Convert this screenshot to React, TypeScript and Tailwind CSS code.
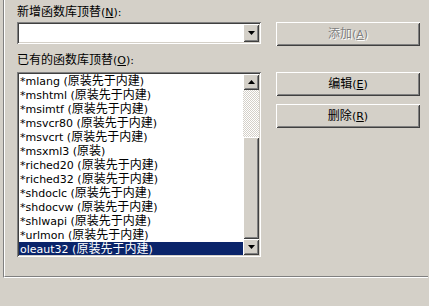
const items = [
  "*mlang (原装先于内建)",
  "*mshtml (原装先于内建)",
  "*msimtf (原装先于内建)",
  "*msvcr80 (原装先于内建)",
  "*msvcrt (原装先于内建)",
  "*msxml3 (原装)",
  "*riched20 (原装先于内建)",
  "*riched32 (原装先于内建)",
  "*shdoclc (原装先于内建)",
  "*shdocvw (原装先于内建)",
  "*shlwapi (原装先于内建)",
  "*urlmon (原装先于内建)",
  "oleaut32 (原装先于内建)",
];
const selected = 12;

// classic 3d edges
const sunken =
  "shadow-[inset_1px_1px_0_#808080,inset_-1px_-1px_0_#ffffff,inset_2px_2px_0_#404040,inset_-2px_-2px_0_#d4d0c8]";
const raised =
  "shadow-[inset_1px_1px_0_#ffffff,inset_-1px_-1px_0_#404040,inset_2px_2px_0_#d4d0c8,inset_-2px_-2px_0_#808080]";

// chinese glyphs a bit larger than the latin ones
const Txt = ({ s }: { s: string }) => (
  <>
    {s.split(/([\u4e00-\u9fff]+)/).map((p, i) =>
      /[\u4e00-\u9fff]/.test(p) ? (
        <span key={i} className="text-[12px]">
          {p}
        </span>
      ) : (
        p
      )
    )}
  </>
);

const Arrow = ({ up }: { up?: boolean }) => (
  <svg width="7" height="4" viewBox="0 0 7 4">
    {up ? <path d="M3.5 0 L7 4 L0 4 Z" fill="#000" /> : <path d="M0 0 L7 0 L3.5 4 Z" fill="#000" />}
  </svg>
);

const Button = ({ label, k, disabled, className }: { label: string; k: string; disabled?: boolean; className?: string }) => (
  <div
    className={`h-[24px] w-[144px] bg-[#d4d0c8] flex items-center justify-center text-[11px] ${raised} ${
      disabled ? "text-[#808080] [text-shadow:1px_1px_0_#ffffff]" : "text-black"
    } ${className ?? ""}`}
  >
    <span>
      <Txt s={label} />(<u>{k}</u>)
    </span>
  </div>
);

export default function App() {
  return (
    <div className="w-[429px] h-[306px] overflow-hidden bg-[#d4d0c8] pl-[3px] font-['DejaVu_Sans','Noto_Sans_CJK_SC',sans-serif] text-black">
      {/* group box, top and right edges are off screen */}
      <div className="h-[278px] w-[425px] border-l border-b border-l-[#808080] border-b-white">
        <div className="h-full border-l border-b border-l-white border-b-[#808080] flex gap-[15px] pl-[12px] pt-[5px]">
          {/* left column */}
          <div className="w-[244px] flex flex-col">
            <div className="h-[14px] leading-[14px] text-[11px]">
              <Txt s="新增函数库顶替" />(<u>N</u>):
            </div>
            <div className={`mt-[3px] h-[22px] bg-white ${sunken} p-[2px] flex justify-end`}>
              <div className={`w-[16px] h-full bg-[#d4d0c8] ${raised} flex items-center justify-center`}>
                <Arrow />
              </div>
            </div>
            <div className="mt-[9px] h-[14px] leading-[14px] text-[11px]">
              <Txt s="已有的函数库顶替" />(<u>O</u>):
            </div>
            <div className={`mt-[5px] h-[185px] bg-white ${sunken} p-[2px] flex overflow-hidden`}>
              <div className="flex-1 flex flex-col overflow-hidden">
                {items.map((t, i) => (
                  <div
                    key={t}
                    className={`h-[14px] shrink-0 leading-[14px] text-[11px] pl-[1px] whitespace-nowrap ${
                      i === selected ? "bg-[#0a246a] text-white" : ""
                    }`}
                  >
                    <Txt s={t} />
                  </div>
                ))}
              </div>
              {/* scrollbar */}
              <div className="w-[16px] flex flex-col">
                <div className={`h-[16px] shrink-0 bg-[#d4d0c8] ${raised} flex items-center justify-center`}>
                  <Arrow up />
                </div>
                <div className="h-[47px] shrink-0 [background:repeating-conic-gradient(#d4d0c8_0_25%,#ffffff_0_50%)_0_0/2px_2px]" />
                <div className={`flex-1 bg-[#d4d0c8] ${raised}`} />
                <div className={`h-[16px] shrink-0 bg-[#d4d0c8] ${raised} flex items-center justify-center`}>
                  <Arrow />
                </div>
              </div>
            </div>
          </div>
          {/* right column */}
          <div className="w-[144px] flex flex-col pt-[17px]">
            <Button label="添加" k="A" disabled className="h-[23px]" />
            <Button label="编辑" k="E" className="mt-[26px]" />
            <Button label="删除" k="R" className="mt-[8px]" />
          </div>
        </div>
      </div>
    </div>
  );
}
